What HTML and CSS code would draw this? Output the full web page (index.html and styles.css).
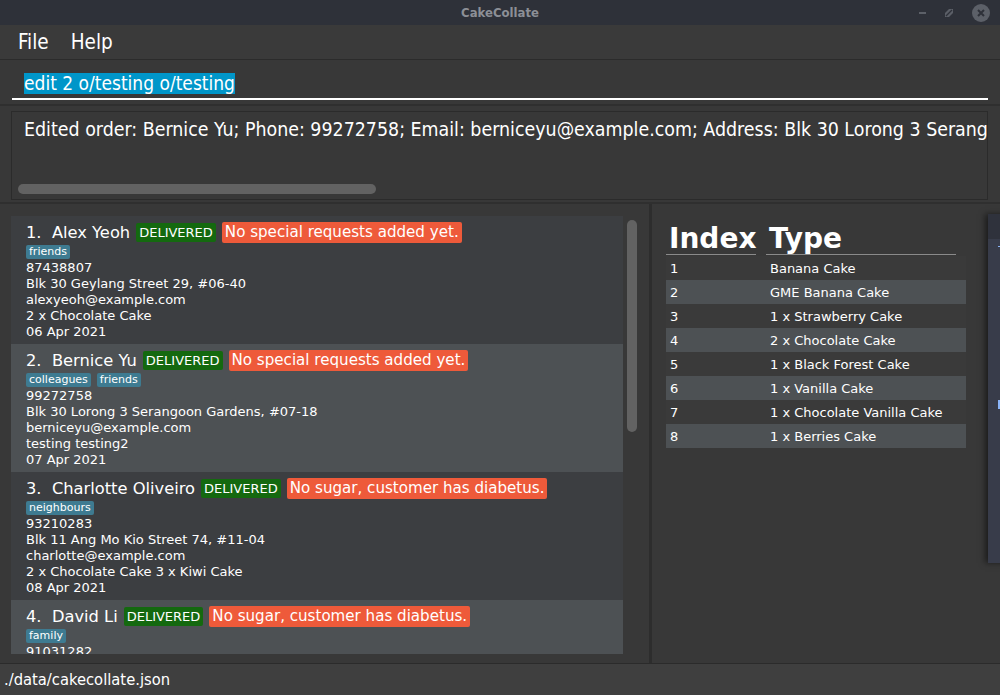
FILE: index.html
```html
<!DOCTYPE html>
<html>
<head>
<meta charset="utf-8">
<link rel="stylesheet" href="styles.css">
</head>
<body>
<div class="app">
  <div class="titlebar">
    <span class="title">CakeCollate</span>
    <div class="wctrl">
      <span class="wmin"></span>
      <svg class="wmax" width="10" height="10" viewBox="0 0 10 10"><path d="M1 5 L5 1 L9 1 L9 5 L5 9 L1 9 Z" fill="#5b5f67"/><path d="M2 8 L8 2" stroke="#2e3139" stroke-width="1.2"/></svg>
      <svg class="wclose" width="18" height="18" viewBox="0 0 18 18"><circle cx="9" cy="9" r="9" fill="#5c6068"/><path d="M6 6 L12 12 M12 6 L6 12" stroke="#2e3139" stroke-width="2"/></svg>
    </div>
  </div>
  <div class="menubar">
    <span class="menu">File</span>
    <span class="menu">Help</span>
  </div>
  <div class="command">
    <div class="field"><span class="sel">edit 2 o/testing o/testing</span></div>
  </div>
  <div class="result-wrap">
    <div class="result">
      <div class="result-text">Edited order: Bernice Yu; Phone: 99272758; Email: berniceyu@example.com; Address: Blk 30 Lorong 3 Serangoon Gardens, #07-18</div>
      <div class="hscroll"></div>
    </div>
  </div>
  <div class="main">
    <div class="left">
      <div class="list">
        <div class="card dark">
          <div class="head"><span class="name">1.&nbsp; Alex Yeoh</span><span class="deliv">DELIVERED</span><span class="req">No special requests added yet.</span></div>
          <div class="tags"><span class="tag">friends</span></div>
          <div class="line">87438807</div>
          <div class="line">Blk 30 Geylang Street 29, #06-40</div>
          <div class="line">alexyeoh@example.com</div>
          <div class="line">2 x Chocolate Cake</div>
          <div class="line">06 Apr 2021</div>
        </div>
        <div class="card light">
          <div class="head"><span class="name">2.&nbsp; Bernice Yu</span><span class="deliv">DELIVERED</span><span class="req">No special requests added yet.</span></div>
          <div class="tags"><span class="tag">colleagues</span><span class="tag">friends</span></div>
          <div class="line">99272758</div>
          <div class="line">Blk 30 Lorong 3 Serangoon Gardens, #07-18</div>
          <div class="line">berniceyu@example.com</div>
          <div class="line">testing testing2</div>
          <div class="line">07 Apr 2021</div>
        </div>
        <div class="card dark">
          <div class="head"><span class="name">3.&nbsp; Charlotte Oliveiro</span><span class="deliv">DELIVERED</span><span class="req">No sugar, customer has diabetus.</span></div>
          <div class="tags"><span class="tag">neighbours</span></div>
          <div class="line">93210283</div>
          <div class="line">Blk 11 Ang Mo Kio Street 74, #11-04</div>
          <div class="line">charlotte@example.com</div>
          <div class="line">2 x Chocolate Cake 3 x Kiwi Cake</div>
          <div class="line">08 Apr 2021</div>
        </div>
        <div class="card light last">
          <div class="head"><span class="name">4.&nbsp; David Li</span><span class="deliv">DELIVERED</span><span class="req">No sugar, customer has diabetus.</span></div>
          <div class="tags"><span class="tag">family</span></div>
          <div class="line">91031282</div>
        </div>
      </div>
      <div class="vscroll-track"><div class="vscroll"></div></div>
    </div>
    <div class="divider"></div>
    <div class="right">
      <table class="types">
        <thead><tr><th class="c1">Index</th><th class="gap"></th><th class="c2">Type</th><th class="gap2"></th></tr></thead>
        <tbody>
          <tr class="r-dark"><td class="ix">1</td><td class="g"></td><td colspan="2">Banana Cake</td></tr>
          <tr class="r-light"><td class="ix">2</td><td class="g"></td><td colspan="2">GME Banana Cake</td></tr>
          <tr class="r-dark"><td class="ix">3</td><td class="g"></td><td colspan="2">1 x Strawberry Cake</td></tr>
          <tr class="r-light"><td class="ix">4</td><td class="g"></td><td colspan="2">2 x Chocolate Cake</td></tr>
          <tr class="r-dark"><td class="ix">5</td><td class="g"></td><td colspan="2">1 x Black Forest Cake</td></tr>
          <tr class="r-light"><td class="ix">6</td><td class="g"></td><td colspan="2">1 x Vanilla Cake</td></tr>
          <tr class="r-dark"><td class="ix">7</td><td class="g"></td><td colspan="2">1 x Chocolate Vanilla Cake</td></tr>
          <tr class="r-light"><td class="ix">8</td><td class="g"></td><td colspan="2">1 x Berries Cake</td></tr>
        </tbody>
      </table>
    </div>
  </div>
  <div class="status">./data/cakecollate.json</div>
  <div class="otherwin">
    <div class="ow-title"></div>
    <div class="ow-body"><span class="ow-mark1"></span><span class="ow-mark2"></span></div>
  </div>
</div>
</body>
</html>
```

FILE: styles.css
```css
* { box-sizing: border-box; }
html, body { margin: 0; padding: 0; background: #383838; }
.app {
  position: relative;
  width: 1000px;
  height: 695px;
  overflow: hidden;
  display: flex;
  flex-direction: column;
  font-family: "DejaVu Sans", sans-serif;
  color: #ffffff;
  background: #383838;
}
.titlebar {
  height: 25px;
  flex: none;
  background: #2e3139;
  display: flex;
  align-items: center;
  justify-content: center;
  position: relative;
}
.title {
  font-family: "DejaVu Sans Condensed", "DejaVu Sans", sans-serif;
  font-weight: bold;
  font-size: 13px;
  color: #8c8f96;
}
.wctrl {
  position: absolute;
  right: 10px;
  top: 4px;
  display: flex;
  align-items: center;
  gap: 18px;
}
.wmin { width: 7px; height: 2px; background: #5c6068; display: block; }
.wmax { display: block; }
.wclose { display: block; }
.menubar {
  height: 35px;
  flex: none;
  background: #3a3a3a;
  border-bottom: 1px solid #2b2b2b;
  display: flex;
  align-items: center;
  padding-left: 18px;
  gap: 22px;
  font-family: "DejaVu Sans Condensed", "DejaVu Sans", sans-serif;
  font-size: 20.5px;
}
.command {
  height: 46px;
  flex: none;
  background: #383838;
  padding: 12px 12px 0 12px;
  border-bottom: 2px solid #2f2f2f;
}
.field {
  border-bottom: 2px solid #ffffff;
  height: 28px;
  padding-left: 12px;
  font-family: "DejaVu Sans Condensed", "DejaVu Sans", sans-serif;
  font-size: 19px;
}
.sel {
  background: #0096c9;
  color: #ffffff;
  line-height: 21px;
  display: inline-block;
}
.result-wrap {
  height: 98px;
  flex: none;
  padding: 5px 12px 0 11px;
  border-bottom: 2px solid #2f2f2f;
}
.result {
  height: 89px;
  border: 1px solid #2b2b2b;
  overflow: hidden;
  position: relative;
  padding: 6px 0 0 12px;
}
.result-text {
  white-space: nowrap;
  font-family: "DejaVu Sans Condensed", "DejaVu Sans", sans-serif;
  font-size: 19.4px;
  color: #ffffff;
}
.hscroll {
  position: absolute;
  left: 6px;
  top: 72px;
  width: 358px;
  height: 10px;
  border-radius: 5px;
  background: #626262;
}
.main {
  flex: 1;
  display: flex;
  min-height: 0;
}
.left {
  width: 649px;
  flex: none;
  display: flex;
  padding: 12px 0 8px 11px;
  gap: 4px;
}
.list {
  width: 612px;
  overflow: hidden;
  display: flex;
  flex-direction: column;
}
.card {
  flex: none;
  height: 128px;
  padding: 5px 0 0 15px;
}
.card.last { height: 54px; overflow: hidden; }
.card.dark { background: #3c3e41; }
.card.light { background: #4d5154; }
.head {
  display: flex;
  align-items: center;
  height: 22px;
  padding-top: 1px;
}
.name {
  font-size: 16.3px;
  color: #ffffff;
  white-space: pre;
  margin-right: 6px;
}
.deliv {
  background: #14690f;
  color: #ffffff;
  font-size: 13px;
  padding: 1px 3px;
  border-radius: 2px;
  margin-right: 6px;
  line-height: 17px;
}
.req {
  background: #ee5a3a;
  color: #ffffff;
  font-size: 15.1px;
  padding: 1px 3px;
  border-radius: 2px;
  line-height: 19px;
}
.tags {
  display: flex;
  gap: 6px;
  height: 17px;
  align-items: center;
}
.tag {
  background: #3e7b91;
  color: #ffffff;
  font-size: 11px;
  padding: 0 3px;
  border-radius: 2px;
  line-height: 14px;
}
.line {
  font-size: 13px;
  line-height: 16px;
  color: #ffffff;
}
.vscroll-track {
  width: 10px;
  flex: none;
}
.vscroll {
  margin-top: 4px;
  height: 212px;
  width: 10px;
  border-radius: 5px;
  background: #626262;
}
.divider {
  width: 3px;
  flex: none;
  background: #2d2d2d;
}
.right {
  flex: 1;
  padding: 20px 0 0 14px;
}
.types {
  border-collapse: separate;
  border-spacing: 0;
  width: 300px;
  table-layout: fixed;
}
.types th {
  font-size: 28px;
  font-weight: bold;
  text-align: left;
  color: #ffffff;
  padding: 0 0 0 3px;
  line-height: 30px;
  border-bottom: 1px solid #8a8a8a;
}
.types th.c1 { width: 90px; }
.types th.gap { width: 10px; border-bottom: none; padding: 0; }
.types th.c2 { width: 190px; }
.types th.gap2 { width: 10px; border-bottom: none; padding: 0; }
.types td {
  font-size: 13px;
  height: 24px;
  padding: 0 0 0 4px;
  color: #ffffff;
  white-space: nowrap;
}
.types td.g { padding: 0; }
.types tbody tr:first-child td { border-top: 1px solid #383838; height: 25px; }
.r-dark { background: #3a3a3a; }
.r-light { background: #4d5154; }
.otherwin {
  position: absolute;
  left: 988px;
  top: 214px;
  width: 40px;
  height: 349px;
  background: #383c4a;
  box-shadow: -3px 0 6px rgba(0,0,0,0.5);
}
.ow-title { height: 25px; background: #2f323c; }
.ow-mark1 { position: absolute; left: 10px; top: 32px; width: 4px; height: 1px; background: #8ab4f8; }
.ow-mark2 { position: absolute; left: 10px; top: 186px; width: 2px; height: 9px; background: #8ab4f8; }
.status {
  height: 32px;
  flex: none;
  background: #3f3f3f;
  border-top: 1px solid #2b2b2b;
  padding-left: 4px;
  display: flex;
  align-items: center;
  font-family: "DejaVu Sans Condensed", "DejaVu Sans", sans-serif;
  font-size: 16.4px;
  color: #ffffff;
}
```
